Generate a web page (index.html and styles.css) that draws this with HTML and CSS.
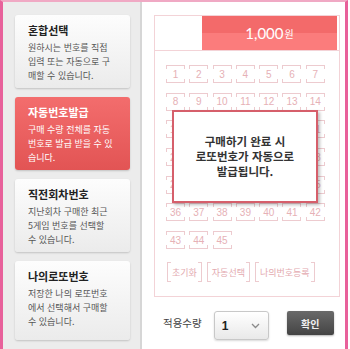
FILE: index.html
```html
<!DOCTYPE html>
<html lang="ko">
<head>
    <meta charset="UTF-8">
    <meta name="viewport" content="width=device-width, initial-scale=1.0">
    <title>번호선택</title>
    <link rel="stylesheet" href="styles.css">
</head>
<body>
    <div class="frame">
        <div class="side">
            <div class="card">
                <h3>혼합선택</h3>
                <p>원하시는 번호를 직접<br>입력 또는 자동으로 구<br>매할 수 있습니다.</p>
            </div>
            <div class="card on">
                <h3>자동번호발급</h3>
                <p>구매 수량 전체를 자동<br>번호로 발급 받을 수 있<br>습니다.</p>
            </div>
            <div class="card">
                <h3>직전회차번호</h3>
                <p>지난회차 구매한 최근<br>5게임 번호를 선택할<br>수 있습니다.</p>
            </div>
            <div class="card tall">
                <h3>나의로또번호</h3>
                <p>저장한 나의 로또번호<br>에서 선택해서 구매할<br>수 있습니다.</p>
            </div>
        </div>

        <div class="main">
            <div class="board">
                <div class="board-head">
                    <div class="head-blank"></div>
                    <div class="head-price">1,000<small>원</small></div>
                </div>

                <div class="nums">
                    <span>1</span><span>2</span><span>3</span><span>4</span><span>5</span><span>6</span><span>7</span>
                    <span>8</span><span>9</span><span>10</span><span>11</span><span>12</span><span>13</span><span>14</span>
                    <span>15</span><span>16</span><span>17</span><span>18</span><span>19</span><span>20</span><span>21</span>
                    <span>22</span><span>23</span><span>24</span><span>25</span><span>26</span><span>27</span><span>28</span>
                    <span>29</span><span>30</span><span>31</span><span>32</span><span>33</span><span>34</span><span>35</span>
                    <span>36</span><span>37</span><span>38</span><span>39</span><span>40</span><span>41</span><span>42</span>
                    <span>43</span><span>44</span><span>45</span>
                </div>

                <div class="tools">
                    <span>초기화</span>
                    <span>자동선택</span>
                    <span>나의번호등록</span>
                </div>

                <div class="notice">
                    <p>구매하기 완료 시<br>로또번호가 자동으로<br>발급됩니다.</p>
                </div>
            </div>

            <div class="qty">
                <label>적용수량</label>
                <div class="select">
                    <b>1</b>
                    <svg width="9" height="6" viewBox="0 0 9 6"><path d="M1 1 L4.5 4.5 L8 1" fill="none" stroke="#8a8a8a" stroke-width="1.3"/></svg>
                </div>
                <button type="button" class="ok">확인</button>
            </div>
        </div>
    </div>
</body>
</html>
```

FILE: styles.css
```css
body {
    margin: 0;
    font-family: "Noto Sans CJK KR", "Noto Sans", sans-serif;
    background-color: #fff;
}

.frame {
    display: flex;
    width: 348px;
    height: 349px;
    box-sizing: border-box;
    border-left: 3px solid #e8619b;
    border-right: 3px solid #e8619b;
    border-top: 2px solid #f0a9c4;
}

/* columna izquierda */
.side {
    width: 139px;
    box-sizing: border-box;
    background-color: #ececec;
    border-right: 2px solid #d6d6d6;
    padding: 13px 0 0 12px;
    display: flex;
    flex-direction: column;
    gap: 9px;
}

.card {
    width: 115px;
    height: 73px;
    box-sizing: border-box;
    padding: 8px 0 0 13px;
    background: linear-gradient(#fdfdfd, #ebebeb);
    border-radius: 3px;
    box-shadow: 0 1px 2px rgba(0, 0, 0, 0.18);
}

.card.tall {
    height: 79px;
}

.card h3 {
    margin: 0;
    font-size: 11px;
    line-height: 15px;
    font-weight: bold;
    color: #222;
}

.card p {
    margin: 3px 0 0;
    font-size: 9px;
    line-height: 14px;
    color: #555;
    white-space: nowrap;
}

.card.on {
    background: linear-gradient(#f36d6d, #e25454);
}

.card.on h3,
.card.on p {
    color: #fff;
}

/* columna derecha */
.main {
    flex: 1;
    padding: 13px 5px 0 12px;
}

.board {
    position: relative;
    border: 1px solid #f3d3d7;
}

.board-head {
    display: flex;
    height: 34px;
    border-bottom: 1px solid #f3d3d7;
}

.head-blank {
    width: 47px;
}

.head-price {
    flex: 1;
    margin-right: 2px;
    display: flex;
    align-items: center;
    justify-content: center;
    background: linear-gradient(#f36a6a 50%, #fb7c7c 50%);
    color: #fff;
    font-family: Lato, "Liberation Sans", sans-serif;
    font-size: 15px;
}

.head-price small {
    font-family: "Noto Sans CJK KR", sans-serif;
    font-size: 10px;
    margin-left: 1px;
}

.nums {
    display: grid;
    grid-template-columns: repeat(7, 19px);
    column-gap: 4.3px;
    row-gap: 9.7px;
    padding: 14px 0 0 11px;
}

.nums span {
    height: 18px;
    display: flex;
    align-items: center;
    justify-content: center;
    font-family: "Liberation Sans", sans-serif;
    font-size: 10px;
    color: #e6b1b6;
    background:
        linear-gradient(#edcbcf, #edcbcf) top / 100% 1px no-repeat,
        linear-gradient(#edcbcf, #edcbcf) bottom / 100% 1px no-repeat,
        linear-gradient(#edcbcf, #edcbcf) left top / 1px 4px no-repeat,
        linear-gradient(#edcbcf, #edcbcf) right top / 1px 4px no-repeat,
        linear-gradient(#edcbcf, #edcbcf) left bottom / 1px 4px no-repeat,
        linear-gradient(#edcbcf, #edcbcf) right bottom / 1px 4px no-repeat;
}

.tools {
    display: flex;
    gap: 5px;
    padding: 13px 0 14px 12px;
}

.tools span {
    height: 20px;
    padding: 0 5px;
    display: flex;
    align-items: center;
    font-size: 9px;
    color: #e3aab0;
    background:
        linear-gradient(#edcbcf, #edcbcf) left / 1px 100% no-repeat,
        linear-gradient(#edcbcf, #edcbcf) right / 1px 100% no-repeat,
        linear-gradient(#edcbcf, #edcbcf) left top / 4px 1px no-repeat,
        linear-gradient(#edcbcf, #edcbcf) right top / 4px 1px no-repeat,
        linear-gradient(#edcbcf, #edcbcf) left bottom / 4px 1px no-repeat,
        linear-gradient(#edcbcf, #edcbcf) right bottom / 4px 1px no-repeat;
}

.notice {
    position: absolute;
    left: 17px;
    top: 94px;
    width: 146px;
    height: 93px;
    box-sizing: border-box;
    display: flex;
    align-items: center;
    justify-content: center;
    background-color: #fff;
    border: 2px solid #d65f6b;
    box-shadow: 2px 2px 3px rgba(0, 0, 0, 0.25);
}

.notice p {
    margin: 0;
    text-align: center;
    font-size: 11.5px;
    line-height: 15px;
    font-weight: bold;
    color: #333;
}

/* cantidad */
.qty {
    display: flex;
    align-items: flex-start;
    margin-top: 14px;
    padding-left: 9px;
}

.qty label {
    font-size: 10.5px;
    line-height: 24px;
    color: #444;
    margin-right: 12px;
}

.select {
    width: 55px;
    height: 29px;
    box-sizing: border-box;
    padding: 0 8px 0 7px;
    display: flex;
    align-items: center;
    justify-content: space-between;
    border: 1px solid #c8c8c8;
    border-radius: 3px;
    background: linear-gradient(#fff, #e9e9e9);
    box-shadow: 0 1px 2px rgba(0, 0, 0, 0.15);
}

.select b {
    font-family: "Liberation Sans", sans-serif;
    font-size: 12px;
    color: #222;
}

.ok {
    margin-left: 18px;
    width: 47px;
    height: 24px;
    padding: 0;
    border: none;
    border-radius: 2px;
    background: linear-gradient(#6a6a6a, #444);
    box-shadow: 0 1px 2px rgba(0, 0, 0, 0.3);
    color: #f0f0f0;
    font-family: "Noto Sans CJK KR", sans-serif;
    font-size: 10px;
    font-weight: bold;
}
```
